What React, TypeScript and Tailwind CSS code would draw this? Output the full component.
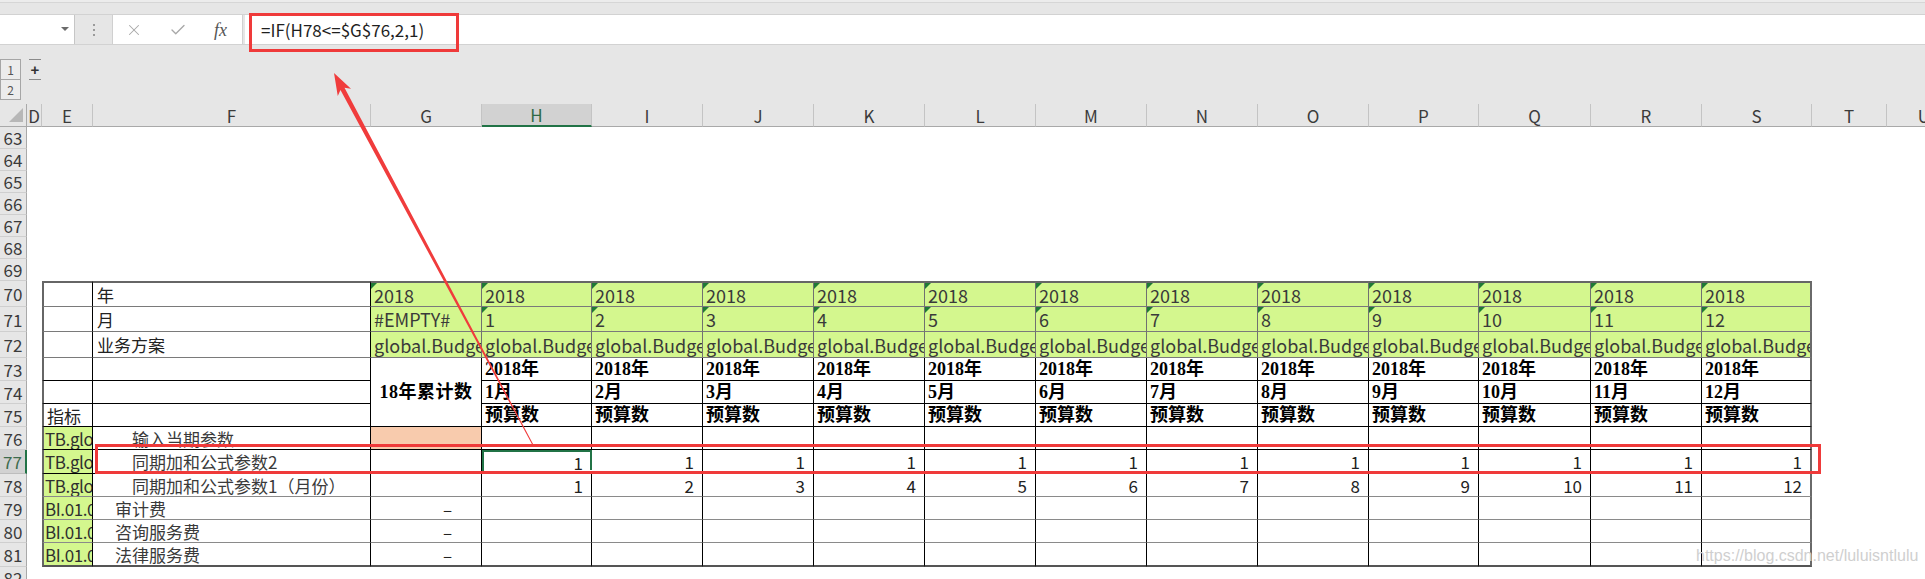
import React from "react";
import { X, Check } from "lucide-react";

const MONTHS = [1, 2, 3, 4, 5, 6, 7, 8, 9, 10, 11, 12];
const COLS = ["D", "E", "F", "G", "H", "I", "J", "K", "L", "M", "N", "O", "P", "Q", "R", "S", "T", "U"];

const BASE = "relative flex items-center whitespace-nowrap overflow-hidden text-[17px] leading-none";
const GREEN = "bg-[#d4f78e] text-[#3a3a3a] pl-[3px] text-[18px]";
const SERIF_B = "font-['Liberation_Serif','Noto_Sans_CJK_SC',serif] font-bold text-[18px] text-black pl-[3px]";

type Col = "E" | "F" | "G" | "M";

function borders(row: number, col: Col, last: boolean): string {
  const top = row === 70 ? " border-t-2 border-t-[#666666]" : "";
  const left = col === "E" ? " border-l-2 border-l-[#666666]" : "";
  const right = last
    ? " border-r-2 border-r-[#6a6a6a]"
    : row <= 72 && (col === "G" || col === "M")
    ? " border-r border-r-[#707070]"
    : " border-r border-r-black";
  const bottom =
    row === 81
      ? " border-b-2 border-b-[#555555]"
      : row <= 72
      ? " border-b border-b-[#7a7a7a]"
      : row >= 78
      ? " border-b border-b-[#8a8a8a]"
      : " border-b border-b-black";
  return top + left + right + bottom;
}

function Tri() {
  return (
    <span className="absolute left-0 top-0 w-0 h-0 border-t-[6px] border-r-[6px] border-t-[#1f7a35] border-r-transparent" />
  );
}

function RowHdr({ n, sel = false }: { n: number; sel?: boolean }) {
  return (
    <div
      className={
        sel
          ? "flex items-center justify-center bg-[#d2d2d2] border-r-2 border-r-[#217346] border-b border-b-[#bdbdbd] text-[17px] leading-none text-[#3d6b4d]"
          : "flex items-center justify-center bg-[#e6e6e6] border-r border-r-[#a9a9a9] border-b border-b-[#cfcfcf] text-[17px] leading-none text-[#3b3b3b]"
      }
    >
      {n}
    </div>
  );
}

function White() {
  return <div className="bg-white" />;
}

function tableRow(row: number): React.ReactNode[] {
  const out: React.ReactNode[] = [];
  const k = (s: string) => `${row}-${s}`;
  out.push(<RowHdr key={k("h")} n={row} sel={row === 77} />);
  out.push(<White key={k("D")} />);

  // E column
  const eText: Record<number, string> = {
    75: "指标",
    76: "TB.glo",
    77: "TB.glo",
    78: "TB.glo",
    79: "BI.01.0",
    80: "BI.01.0",
    81: "BI.01.0",
  };
  out.push(
    <div
      key={k("E")}
      className={
        BASE +
        (row >= 76
          ? " bg-[#d4f78e] text-[#2f2f2f] pl-[1px] text-[16px] tracking-[-0.4px]"
          : " bg-white text-[#222] pl-[3px]") +
        borders(row, "E", false)
      }
    >
      {eText[row] ?? ""}
    </div>
  );

  // F column
  const fText: Record<number, [string, string]> = {
    70: ["年", "pl-[4px]"],
    71: ["月", "pl-[4px]"],
    72: ["业务方案", "pl-[4px]"],
    76: ["输入当期参数", "pl-[39px]"],
    77: ["同期加和公式参数2", "pl-[39px]"],
    78: ["同期加和公式参数1（月份）", "pl-[39px]"],
    79: ["审计费", "pl-[22px]"],
    80: ["咨询服务费", "pl-[22px]"],
    81: ["法律服务费", "pl-[22px]"],
  };
  const f = fText[row];
  out.push(
    <div
      key={k("F")}
      className={
        BASE +
        " bg-white " +
        (row >= 76 ? "text-[#3a3a3a] " : "text-[#222] ") +
        (f ? f[1] : "") +
        borders(row, "F", false)
      }
    >
      {f ? f[0] : ""}
    </div>
  );

  // G column
  if (row === 70 || row === 71 || row === 72) {
    const g = row === 70 ? "2018" : row === 71 ? "#EMPTY#" : "global.Budget";
    out.push(
      <div key={k("G")} className={BASE + " " + GREEN + borders(row, "G", false)}>
        {row === 70 && <Tri />}
        {g}
      </div>
    );
  } else if (row === 73) {
    out.push(
      <div
        key={k("G")}
        className="row-span-3 flex items-center justify-center bg-white border-r border-r-black border-b border-b-black font-['Liberation_Serif','Noto_Sans_CJK_SC',serif] font-bold text-[18px] leading-none text-black tracking-[0.5px]"
      >
        18年累计数
      </div>
    );
  } else if (row === 74 || row === 75) {
    // merged into G73
  } else {
    out.push(
      <div
        key={k("G")}
        className={
          BASE +
          (row === 76 ? " bg-[#f8cbad]" : " bg-white") +
          " justify-end pr-[29px] text-[#222]" +
          borders(row, "G", false)
        }
      >
        {row >= 79 ? "–" : ""}
      </div>
    );
  }

  // H..S
  MONTHS.forEach((m, i) => {
    const last = i === 11;
    const key = k("m" + m);
    if (row === 70 || row === 71 || row === 72) {
      const t = row === 70 ? "2018" : row === 71 ? String(m) : "global.Budget";
      out.push(
        <div key={key} className={BASE + " " + GREEN + borders(row, "M", last)}>
          {row !== 72 && <Tri />}
          {t}
        </div>
      );
    } else if (row >= 73 && row <= 75) {
      const t = row === 73 ? "2018年" : row === 74 ? `${m}月` : "预算数";
      out.push(
        <div key={key} className={BASE + " bg-white " + SERIF_B + borders(row, "M", last)}>
          {t}
        </div>
      );
    } else if (row === 77 && i === 0) {
      out.push(
        <div
          key={key}
          className="relative flex items-center justify-end pr-[7px] bg-white border-2 border-[#217346] text-[17px] leading-none text-[#222]"
        >
          1
          <span className="absolute right-[-4px] bottom-[-4px] w-[6px] h-[6px] bg-[#217346] border border-white" />
        </div>
      );
    } else {
      const t = row === 77 ? "1" : row === 78 ? String(m) : "";
      out.push(
        <div
          key={key}
          className={BASE + " bg-white justify-end pr-[8px] text-[#222]" + borders(row, "M", last)}
        >
          {t}
        </div>
      );
    }
  });

  out.push(<White key={k("T")} />);
  out.push(<White key={k("U")} />);
  return out;
}

export default function App() {
  const cells: React.ReactNode[] = [];

  // Column header row
  cells.push(
    <div key="corner" className="relative bg-[#e6e6e6] border-r border-r-[#a9a9a9] border-b border-b-[#a9a9a9]">
      <span className="absolute right-[3px] bottom-[4px] w-0 h-0 border-b-[14px] border-l-[14px] border-b-[#b7b7b7] border-l-transparent" />
    </div>
  );
  COLS.forEach((c) => {
    cells.push(
      <div
        key={"c" + c}
        className={
          c === "H"
            ? "flex items-center justify-center bg-[#d2d2d2] border-r border-r-[#c4c4c4] border-b-2 border-b-[#217346] text-[17px] leading-none text-[#2f6b45]"
            : "flex items-center justify-center bg-[#e6e6e6] border-r border-r-[#c4c4c4] border-b border-b-[#a9a9a9] text-[17px] leading-none text-[#3b3b3b]"
        }
      >
        {c}
      </div>
    );
  });

  for (let r = 63; r <= 69; r++) {
    cells.push(<RowHdr key={"h" + r} n={r} />);
    cells.push(<div key={"w" + r} className="col-span-18 bg-white" />);
  }
  for (let r = 70; r <= 81; r++) {
    cells.push(...tableRow(r));
  }
  cells.push(<RowHdr key="h82" n={82} />);
  cells.push(<div key="w82" className="col-span-18 bg-white" />);

  return (
    <div className="relative w-[1925px] h-[579px] overflow-hidden bg-[#e6e6e6] font-['Noto_Sans_CJK_SC',sans-serif]">
      {/* top band */}
      <div className="h-[2px] bg-[#ececec]" />
      <div className="h-[1px] bg-[#d6d6d6]" />
      <div className="h-[11px] bg-[#e6e6e6]" />
      <div className="h-[1px] bg-[#d2d2d2]" />

      {/* formula bar */}
      <div className="flex h-[29px] bg-[#e6e6e6]">
        <div className="relative w-[75px] bg-white border-r border-r-[#c6c6c6]">
          <span className="absolute left-[61px] top-[12px] w-0 h-0 border-x-[4px] border-x-transparent border-t-[4px] border-t-[#6b6b6b]" />
        </div>
        <div className="w-[37px] flex flex-col items-center justify-center gap-[3px]">
          <span className="w-[2px] h-[2px] bg-[#9a9a9a]" />
          <span className="w-[2px] h-[2px] bg-[#9a9a9a]" />
          <span className="w-[2px] h-[2px] bg-[#9a9a9a]" />
        </div>
        <div className="w-[131px] bg-white border-x border-x-[#d0d0d0] flex items-center pl-[12px]">
          <X size={18} strokeWidth={1.4} color="#a8a8a8" />
          <Check size={18} strokeWidth={1.8} color="#a8a8a8" className="ml-[26px]" />
          <span className="ml-[27px] font-['Liberation_Serif',serif] italic text-[18px] leading-none text-[#555]">
            fx
          </span>
        </div>
        <div className="w-[2px]" />
        <div className="flex-1 bg-white flex items-center pl-[16px] text-[17px] leading-none text-[#1f1f1f]">
          =IF(H78&lt;=$G$76,2,1)
        </div>
      </div>

      {/* outline area */}
      <div className="flex h-[60px] border-t border-t-[#d2d2d2] bg-[#e6e6e6]">
        <div className="flex flex-col pt-[14px]">
          <div className="w-[21px] h-[21px] border border-[#a6a6a6] bg-[#ececec] flex items-center justify-center text-[12px] leading-none text-[#555]">
            1
          </div>
          <div className="w-[21px] h-[20px] border border-t-0 border-[#a6a6a6] bg-[#ececec] flex items-center justify-center text-[12px] leading-none text-[#555]">
            2
          </div>
        </div>
        <div className="ml-[8px] mt-[14px] w-[12px] h-[21px] border-y border-y-[#8a8a8a] flex items-center justify-center font-['Liberation_Sans',sans-serif] text-[15px] font-bold leading-none text-[#333]">
          +
        </div>
      </div>

      {/* sheet grid */}
      <div className="grid grid-cols-[27px_15px_51px_278px_111px_110px_111px_111px_111px_111px_111px_111px_111px_110px_112px_111px_110px_75px_75px] grid-rows-[23px_22px_22px_22px_22px_22px_22px_22px_26px_25px_26px_23px_23px_23px_23px_24px_23px_23px_23px_24px_22px]">
        {cells}
      </div>

      {/* annotations */}
      <div className="absolute left-[249px] top-[13px] w-[210px] h-[39px] border-[3px] border-[#ef3a3a]" />
      <div className="absolute left-[95px] top-[444px] w-[1726px] h-[30px] border-[3px] border-[#ef3a3a]" />
      <svg
        className="absolute left-0 top-0 pointer-events-none"
        width={1925}
        height={579}
        viewBox="0 0 1925 579"
      >
        <polygon
          points="334,73 350.99,88.86 344.52,87.78 533.44,444.76 532.56,445.24 340.46,89.95 337.77,95.94"
          fill="#f03c3c"
        />
      </svg>
      <div className="absolute left-[1696px] top-[548px] font-['Liberation_Sans',sans-serif] text-[16px] leading-none text-[#cfcfcf] whitespace-nowrap">
        https://blog.csdn.net/luluisntlulu
      </div>
    </div>
  );
}
